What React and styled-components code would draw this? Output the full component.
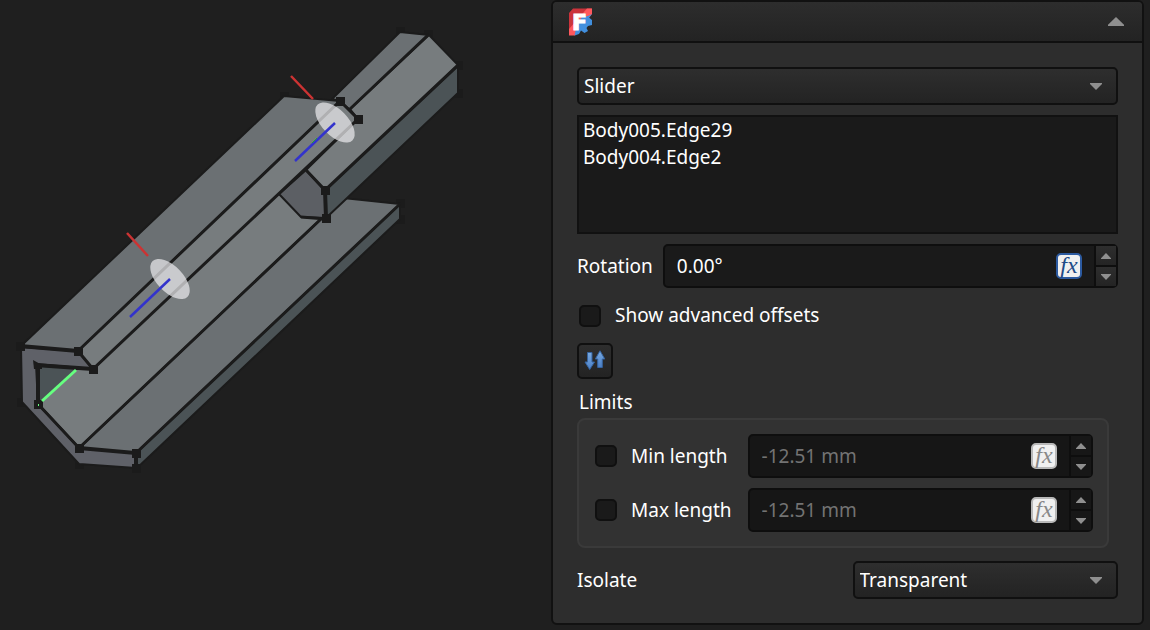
import { useId, useState } from "react";
import styled, { createGlobalStyle, css } from "styled-components";

const LIMITS = [
    { id: "min-length", label: "Min length", value: "-12.51 mm" },
    { id: "max-length", label: "Max length", value: "-12.51 mm" },
];

const REFERENCES = ["Body005.Edge29", "Body004.Edge2"];

const VERTICES = [
    [20, 346], [78, 351], [93, 369], [38, 404], [79, 448], [136, 453],
    [136, 468], [340, 101], [358, 119], [325, 190], [326, 218],
];

const FAR_VERTICES = [
    [21, 402], [79, 464], [284, 96], [400, 31], [428, 34], [458, 65],
    [458, 93], [400, 203], [400, 219],
];

const Model = ()=>(
    <ModelSvg viewBox="0 0 551 630" role="img" aria-label="Slider joint preview">
        <g fill="#1b1b1b">
            {FAR_VERTICES.map(([x, y])=> <rect key={`${x}-${y}`} x={x - 4} y={y - 4} width="9" height="9" />)}
        </g>

        {/* rail */}
        <g stroke="#1b1b1b" strokeWidth="2" strokeLinejoin="round">
            <path fill="#4b5356" d="M136 453L400 203V219L136 469Z" />
            <path fill="#6b7073" d="M79 448L136 453L400 204L343 198Z" />
            <path fill="#777c7e" d="M38 404L79 448L343 198L300 170L93 369H76Z" />
            <path fill="#6b7073" d="M21 346L284 96L340 101L78 351Z" />
            <path fill="#5f6168" fillRule="evenodd" d="M21 347L78 351L93 369L36 364L38 404L79 448L136 453V468L79 464L22 402Z" />
            <path fill="#4b5356" stroke="none" d="M39 366L76 369L40 403Z" />
        </g>

        {/* slider */}
        <g stroke="#1b1b1b" strokeWidth="2" strokeLinejoin="round">
            <path fill="#6b7073" d="M332 99L400 32L429 35L350 110L340 101Z" />
            <path fill="#777c7e" d="M350 109L429 35L458 65L325 191L306 170L358 119Z" />
            <path fill="#4b5356" d="M325 191L458 66V93L326 218Z" />
            <path fill="#5c5f64" d="M306 170L325 191L326 218L301 217L279 194Z" />
        </g>
        <path fill="#777c7e" d="M78 351L340 101L358 119L93 369Z" />

        <g fill="none" stroke="#1b1b1b" strokeWidth="3">
            <path d="M78 351L340 101L358 119L93 369Z" />
            <path d="M79 448L321 219M136 453L400 204M350 109L428 35M325 190L458 65M306 170L325 190" />
        </g>
        <g fill="none" stroke="#1b1b1b" strokeWidth="4">
            <path d="M20 346L78 351M35 365L93 369M38 364V404M79 448L136 453V468M325 190L326 218" />
            <path strokeWidth="3" d="M38 404L79 448M301 217L326 219" />
        </g>
        <g fill="#1b1b1b">
            {VERTICES.map(([x, y])=> <rect key={`${x}-${y}`} x={x - 4} y={y - 4} width="9" height="9" />)}
            <path d="M33 360L42 365V369H34Z" />
        </g>

        {/* joint coordinate systems */}
        <g fill="#e8e8ea" fillOpacity="0.73">
            <ellipse cx="170" cy="279" rx="25" ry="13" transform="rotate(46 170 279)" />
            <ellipse cx="335" cy="122.500" rx="25" ry="13" transform="rotate(46 335 122.500)" />
        </g>
        <g fill="none" strokeWidth="2.500">
            <path stroke="#cc3333" d="M127 233L148 256M291 76L313 99" />
            <path stroke="#3333cc" d="M130 317L170 279M295 161L335 123" />
            <path stroke="#22aa33" d="M312 143L317 138" strokeWidth="1" />
            <path stroke="#66ff80" d="M42 401L76 370" strokeWidth="3" />
            <path stroke="#66ff80" d="M38.500 404V406" strokeWidth="1" />
        </g>
    </ModelSvg>
);

const Logo = ()=>(
    <svg width="25" height="28" viewBox="0 0 25 28" aria-hidden="true">
        <path fill="#cb333b" d="M1 5L5 .5H24L16 10L6 22L1 27Z" />
        <path fill="#ff585d" d="M19 .5H24V6L7 27.500H1V21Z" />
        <path fill="#418fde" d="M24 6L21 9.500L24 12V17L20 18L18.500 20L20 23L16.500 25L13 22.500L11 26L6.500 27.500L9 16L14 9L20 8Z" />
        <LogoLetter x="4" y="22">F</LogoLetter>
    </svg>
);

const Triangle = ({ up, width = 12, height = 7 })=>(
    <svg width={ width } height={ height } viewBox="0 0 12 7" preserveAspectRatio="none" aria-hidden="true">
        <path fill="#8f8f8f" d={ up ? "M6 0L12 6V7H0V6Z" : "M0 0H12V1L6 7L0 1Z" } />
    </svg>
);

const SwapIcon = ()=>(
    <svg width="22" height="22" viewBox="0 0 22 22" aria-hidden="true">
        <defs>
            <linearGradient id="arrow" x1="0" y1="0" x2="0" y2="1">
                <stop offset="0" stopColor="#7aaae0" />
                <stop offset="1" stopColor="#4a7fc6" />
            </linearGradient>
        </defs>
        <g fill="url(#arrow)" stroke="#35639f" strokeWidth="1">
            <path d="M3.500 2.500H8V12H10.500L5.700 19.500L1 12H3.500Z" />
            <path d="M16 .8L20.800 9H18.300V17.500H13.700V9H11.300Z" />
        </g>
    </svg>
);

const Select = ({ options, ...props })=>(
    <SelectBox>
        <SelectInput { ...props }>
            {options.map((option)=> <option key={ option }>{ option }</option>)}
        </SelectInput>
        <Triangle />
    </SelectBox>
);

const SpinBox = ({ label, id, defaultValue, disabled })=>(
    <SpinFrame $disabled={ disabled }>
        <SpinInput id={ id } aria-label={ label } type="text" defaultValue={ defaultValue } disabled={ disabled } />
        <FormulaButton type="button" aria-label={ `${label} formula` } disabled={ disabled }>fx</FormulaButton>
        <Steps>
            <StepButton type="button" aria-label={ `Increase ${label}` } disabled={ disabled }>
                <Triangle up width={ 10 } height={ 6 } />
            </StepButton>
            <StepButton type="button" aria-label={ `Decrease ${label}` } disabled={ disabled }>
                <Triangle width={ 10 } height={ 6 } />
            </StepButton>
        </Steps>
    </SpinFrame>
);

export default function App() {
    const id = useId();
    const [open, setOpen] = useState(true);
    const [enabled, setEnabled] = useState({});

    return(
        <Page>
            <GlobalStyle />
            <Viewport>
                <Model />
            </Viewport>
            <TaskPanel>
                <PanelHeader $open={ open }>
                    <Logo />
                    <CollapseButton type="button" aria-label="Collapse" aria-expanded={ open } onClick={()=>setOpen(!open)}>
                        <Triangle up={ open } width={ 16 } height={ 9 } />
                    </CollapseButton>
                </PanelHeader>
                {open && (
                    <PanelBody>
                        <Select aria-label="Joint type" options={ ["Slider", "Fixed", "Revolute", "Cylindrical", "Ball"] } />
                        <ReferenceList>
                            {REFERENCES.map((name)=> <li key={ name }>{ name }</li>)}
                        </ReferenceList>
                        <FieldRow>
                            <label htmlFor={ `${id}-rotation` }>Rotation</label>
                            <SpinBox id={ `${id}-rotation` } label="Rotation" defaultValue="0.00°" />
                        </FieldRow>
                        <AdvancedLabel>
                            <CheckBox type="checkbox" />
                            Show advanced offsets
                        </AdvancedLabel>
                        <ToolButton type="button" aria-label="Reverse direction">
                            <SwapIcon />
                        </ToolButton>
                        <LimitsSection role="group" aria-labelledby={ `${id}-limits` }>
                            <LimitsTitle id={ `${id}-limits` }>Limits</LimitsTitle>
                            <LimitsBox>
                                {LIMITS.map((limit)=> [
                                    <CheckLabel key={ limit.id }>
                                        <CheckBox
                                            type="checkbox"
                                            checked={ !!enabled[limit.id] }
                                            onChange={(e)=>setEnabled({ ...enabled, [limit.id]: e.target.checked })}
                                        />
                                        { limit.label }
                                    </CheckLabel>,
                                    <SpinBox
                                        key={ `${limit.id}-value` }
                                        label={ limit.label }
                                        defaultValue={ limit.value }
                                        disabled={ !enabled[limit.id] }
                                    />,
                                ])}
                            </LimitsBox>
                        </LimitsSection>
                        <IsolateRow>
                            <label htmlFor={ `${id}-isolate` }>Isolate</label>
                            <Select id={ `${id}-isolate` } options={ ["Transparent", "Wireframe", "Hidden", "Disabled"] } />
                        </IsolateRow>
                    </PanelBody>
                )}
            </TaskPanel>
        </Page>
    );
}

const GlobalStyle = createGlobalStyle`
    *, *::before, *::after{
        box-sizing: border-box;
    }

    body{
        margin: 0;
        background: #1f1f1f;
        color: #ffffff;
        font-family: "Noto Sans", sans-serif;
        font-size: 19px;
        line-height: 27px;
    }

    button, input, select{
        margin: 0;
        font: inherit;
        color: inherit;
    }
`;

const raised = css`
    background: linear-gradient(#2e2e2e, #232323);
    border: 2px solid #101010;
    border-radius: 5px;
`;

const Page = styled.main`
    display: grid;
    grid-template-columns: 551fr 593fr;
    align-items: start;
    padding-right: 6px;
    min-height: 100vh;
`;

const Viewport = styled.section`
    min-width: 0;
`;

const ModelSvg = styled.svg`
    display: block;
    width: 100%;
    height: auto;
`;

const TaskPanel = styled.section`
    min-width: 0;
    background: #2d2d2d;
    border: 2px solid #111111;
    border-radius: 6px;
`;

const PanelHeader = styled.header`
    display: flex;
    align-items: center;
    justify-content: space-between;
    height: 41px;
    padding: 0 18px 0 15px;
    background: linear-gradient(#2d2d2d, #232323);
    border-bottom: ${({ $open })=> ($open ? "2px solid #101010" : "none")};
    border-radius: 4px 4px 0 0;
`;

const LogoLetter = styled.text`
    fill: #ffffff;
    stroke: #ffffff;
    stroke-width: 1px;
    font-family: "DejaVu Sans", sans-serif;
    font-size: 22px;
    font-weight: 700;
`;

const CollapseButton = styled.button`
    display: flex;
    padding: 0;
    background: none;
    border: none;
`;

const PanelBody = styled.div`
    display: flex;
    flex-direction: column;
    gap: 10px;
    padding: 24px;
`;

const SelectBox = styled.div`
    display: grid;
    align-items: center;
    min-width: 0;

    > *{
        grid-area: 1 / 1;
    }

    svg{
        justify-self: end;
        margin-right: 16px;
        pointer-events: none;
    }
`;

const SelectInput = styled.select`
    ${raised}
    appearance: none;
    width: 100%;
    height: 38px;
    padding: 0 32px 0 5px;
`;

const ReferenceList = styled.ul`
    height: 119px;
    margin: 0;
    padding: 0 4px;
    list-style: none;
    background: #1a1a1a;
    border: 2px solid #111111;
    overflow: auto;
`;

const FieldRow = styled.div`
    display: flex;
    align-items: center;
    gap: 10px;
`;

const SpinFrame = styled.div`
    display: flex;
    flex: 1;
    align-items: center;
    min-width: 0;
    height: 44px;
    background: ${({ $disabled })=> ($disabled ? "#161616" : "#1a1a1a")};
    border: 2px solid #0e0e0e;
    border-radius: 5px;
    color: ${({ $disabled })=> ($disabled ? "#737373" : "#ffffff")};
`;

const SpinInput = styled.input`
    flex: 1;
    min-width: 0;
    padding: 0 12px;
    background: none;
    border: none;
    outline: none;
`;

const FormulaButton = styled.button`
    display: flex;
    align-items: center;
    justify-content: center;
    width: 26px;
    height: 26px;
    margin-right: 12px;
    padding: 0 0 2px;
    background: #f0f0f0;
    border: 2px solid #2c5aa0;
    border-radius: 5px;
    color: #204a87;
    font-family: "Liberation Serif", serif;
    font-size: 24px;
    font-style: italic;
    line-height: 20px;

    &:disabled{
        border-color: #b8b8b8;
        color: #888888;
    }
`;

const Steps = styled.div`
    display: flex;
    flex-direction: column;
    align-self: stretch;
    width: 22px;
    border-left: 2px solid #0e0e0e;
`;

const StepButton = styled.button`
    display: flex;
    flex: 1;
    align-items: center;
    justify-content: center;
    padding: 0;
    background: linear-gradient(#2e2e2e, #242424);
    border: none;

    & + &{
        border-top: 2px solid #0e0e0e;
    }

    &:disabled{
        background: #171717;
    }
`;

const CheckLabel = styled.label`
    display: flex;
    align-items: center;
    gap: 14px;
`;

const AdvancedLabel = styled(CheckLabel)`
    height: 35px;
    padding-left: 2px;
`;

const CheckBox = styled.input`
    appearance: none;
    flex: none;
    width: 22px;
    height: 22px;
    background: #1a1a1a;
    border: 2px solid #101010;
    border-radius: 5px;

    &:checked{
        background: #418fde;
    }
`;

const ToolButton = styled.button`
    ${raised}
    display: flex;
    align-items: center;
    justify-content: center;
    width: 36px;
    height: 36px;
    padding: 0;
`;

const LimitsSection = styled.section`
    margin-bottom: 3px;
`;

const LimitsTitle = styled.div`
    height: 29px;
    padding-left: 2px;
`;

const LimitsBox = styled.div`
    display: grid;
    grid-template-columns: auto minmax(0, 1fr);
    gap: 10px 16px;
    margin-right: 9px;
    padding: 14px 14px 14px 16px;
    background: #323232;
    border: 2px solid #3a3a3a;
    border-radius: 8px;
`;

const IsolateRow = styled.div`
    display: grid;
    grid-template-columns: 1fr 1fr;
    align-items: center;
    gap: 10px;
`;
